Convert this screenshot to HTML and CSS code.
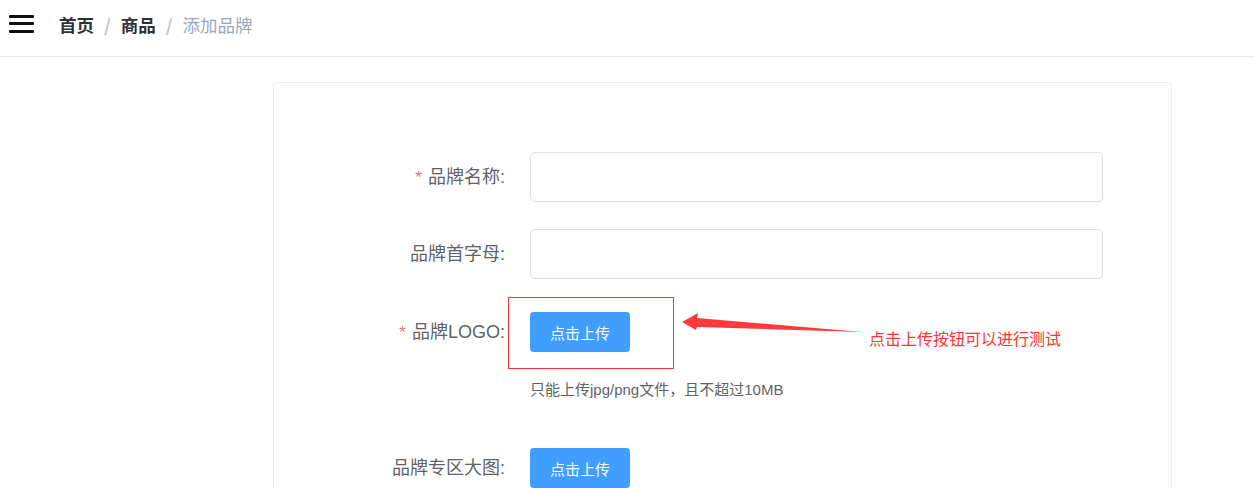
FILE: index.html
```html
<!DOCTYPE html>
<html lang="zh-CN">
<head>
<meta charset="utf-8">
<title>添加品牌</title>
<link rel="stylesheet" href="styles.css">
</head>
<body>
<header class="navbar">
  <svg class="hamburger" width="25" height="18" viewBox="0 0 25 18">
    <rect x="0" y="0" width="25" height="3" rx="1" fill="#111"/>
    <rect x="0" y="7" width="25" height="3" rx="1" fill="#111"/>
    <rect x="0" y="15" width="25" height="3" rx="1" fill="#111"/>
  </svg>
  <nav class="breadcrumb">
    <span class="crumb crumb-link">首页</span>
    <span class="sep">/</span>
    <span class="crumb crumb-link">商品</span>
    <span class="sep">/</span>
    <span class="crumb crumb-current">添加品牌</span>
  </nav>
</header>
<main class="app-main">
  <div class="card">
    <form class="brand-form">
      <div class="form-item">
        <label class="form-label"><span class="star">*</span> 品牌名称:</label>
        <div class="form-content"><input class="input" type="text"></div>
      </div>
      <div class="form-item">
        <label class="form-label">品牌首字母:</label>
        <div class="form-content"><input class="input" type="text"></div>
      </div>
      <div class="form-item upload-item logo-item">
        <label class="form-label tall"><span class="star">*</span> 品牌LOGO:</label>
        <div class="form-content">
          <div class="upload-wrap">
            <button type="button" class="btn-primary">点击上传</button>
            <span class="annot-box"></span>
            <svg class="annot-arrow" width="190" height="30" viewBox="0 0 190 30">
              <polygon points="2,12 18,3 17,8 182,22 17,17 16,20" fill="#fe3a3a"/>
            </svg>
            <span class="annot-text">点击上传按钮可以进行测试</span>
          </div>
          <div class="upload-tip">只能上传jpg/png文件，且不超过10MB</div>
        </div>
      </div>
      <div class="form-item upload-item">
        <label class="form-label tall">品牌专区大图:</label>
        <div class="form-content">
          <div class="upload-wrap">
            <button type="button" class="btn-primary">点击上传</button>
          </div>
        </div>
      </div>
    </form>
  </div>
</main>
</body>
</html>
```
FILE: styles.css
```css
html, body {
  margin: 0;
  padding: 0;
  height: 100%;
  overflow: hidden;
  background: #fff;
  font-family: "Liberation Sans", "Noto Sans CJK SC", sans-serif;
  color: #606266;
}

.navbar {
  height: 56px;
  border-bottom: 1px solid #e6e6e6;
  display: flex;
  align-items: flex-start;
  box-sizing: content-box;
}

.hamburger {
  display: block;
  margin: 15px 0 0 9px;
}

.breadcrumb {
  margin-left: 25px;
  line-height: 50px;
  font-size: 17.5px;
  font-family: "Noto Sans CJK SC", sans-serif;
  display: flex;
}

.crumb-link {
  font-weight: 700;
  color: #303133;
}

.crumb-current {
  color: #97a8be;
}

.sep {
  color: #c0c4cc;
  margin: 0 10px;
  font-weight: 700;
}

.app-main {
  padding: 25px 0 0 273px;
}

.card {
  width: 899px;
  height: 600px;
  box-sizing: border-box;
  border: 1px solid #ebeef5;
  border-radius: 4px;
  padding: 69px 68px 0;
}

.brand-form {
  display: flex;
  flex-direction: column;
}

.form-item {
  display: flex;
  margin-bottom: 27px;
}

.logo-item {
  margin-bottom: 42px;
}

.form-label {
  width: 188px;
  flex: none;
  box-sizing: border-box;
  padding-right: 25px;
  text-align: right;
  line-height: 50px;
  height: 50px;
  font-size: 18px;
  color: #606266;
  font-family: "Liberation Sans", "Noto Sans CJK SC", sans-serif;
}

.form-label.tall {
  line-height: 52px;
  height: 52px;
}

.star {
  color: #f56c6c;
  margin-right: 1px;
  font-size: 17px;
}

.form-content {
  width: 573px;
}

.input {
  display: block;
  width: 573px;
  height: 50px;
  box-sizing: border-box;
  border: 1px solid #dcdfe6;
  border-radius: 5px;
  outline: none;
  padding: 0 18px;
  font-size: 17px;
  background: #fff;
}

.upload-wrap {
  position: relative;
  box-sizing: border-box;
  padding-top: 6px;
  height: 52px;
}

.btn-primary {
  display: block;
  width: 100px;
  height: 40px;
  border: none;
  border-radius: 4px;
  background: #409eff;
  color: #fff;
  font-size: 15px;
  font-family: "Noto Sans CJK SC", sans-serif;
  padding: 0;
  cursor: pointer;
}

.upload-tip {
  margin-top: 22px;
  line-height: 20px;
  font-size: 15px;
  color: #606266;
}

.annot-box {
  position: absolute;
  left: -22px;
  top: -9px;
  width: 166px;
  height: 72px;
  box-sizing: border-box;
  border: 1px solid #f33;
}

.annot-arrow {
  position: absolute;
  left: 150px;
  top: 4px;
}

.annot-text {
  position: absolute;
  left: 339px;
  top: 22px;
  white-space: nowrap;
  font-size: 16px;
  line-height: 20px;
  color: #f33;
  font-family: "Noto Sans CJK SC", sans-serif;
}
```
